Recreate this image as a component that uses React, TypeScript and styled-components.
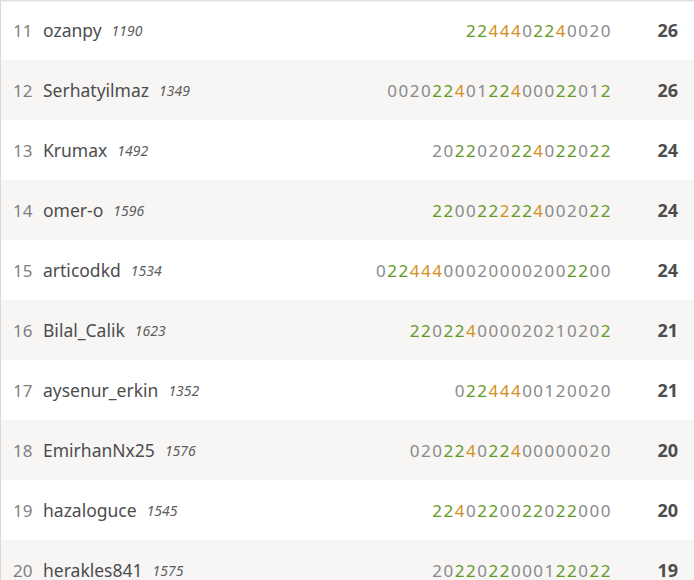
import styled, { createGlobalStyle } from 'styled-components'

const GlobalStyle = createGlobalStyle`
  html, body {
    margin: 0;
    padding: 0;
    background: #fff;
  }
  body {
    font-family: 'Noto Sans', 'Liberation Sans', sans-serif;
    color: #4d4d4d;
    overflow: hidden;
  }
`

type Player = {
  rank: number
  name: string
  rating: number
  sheet: string
  // indexes of scores played while on fire (orange)
  fire: number[]
  total: number
}

const players: Player[] = [
  { rank: 11, name: 'ozanpy', rating: 1190, sheet: '2244402240020', fire: [2, 3, 4, 8], total: 26 },
  { rank: 12, name: 'Serhatyilmaz', rating: 1349, sheet: '00202240122400022012', fire: [6, 11], total: 26 },
  { rank: 13, name: 'Krumax', rating: 1492, sheet: '2022020224022022', fire: [9], total: 24 },
  { rank: 14, name: 'omer-o', rating: 1596, sheet: '2200222224002022', fire: [6, 9], total: 24 },
  { rank: 15, name: 'articodkd', rating: 1534, sheet: '022444000200002002200', fire: [3, 4, 5], total: 24 },
  { rank: 16, name: 'Bilal_Calik', rating: 1623, sheet: '220224000020210202', fire: [5], total: 21 },
  { rank: 17, name: 'aysenur_erkin', rating: 1352, sheet: '02244400120020', fire: [3, 4, 5], total: 21 },
  { rank: 18, name: 'EmirhanNx25', rating: 1576, sheet: '020224022400000020', fire: [5, 9], total: 20 },
  { rank: 19, name: 'hazaloguce', rating: 1545, sheet: '2240220022022000', fire: [2], total: 20 },
  { rank: 20, name: 'herakles841', rating: 1575, sheet: '2022022000122022', fire: [], total: 19 },
]

const Table = styled.div`
  border-left: 1px solid #d9d9d9;
  box-shadow: inset 0 2px 2px -1px rgba(0, 0, 0, 0.18);
`

const Row = styled.div<{ $odd: boolean }>`
  display: flex;
  align-items: center;
  height: 60px;
  padding: 0 16px 0 12px;
  background: ${p => (p.$odd ? '#f7f6f5' : 'transparent')};
`

const Rank = styled.span`
  width: 30px;
  flex-shrink: 0;
  font-size: 17px;
  color: #7f7f7f;
`

const Name = styled.span`
  font-size: 17.5px;
  color: #4d4d4d;
`

const Rating = styled.em`
  margin-left: 10px;
  font-size: 14px;
  color: #5c5c5c;
`

const Sheet = styled.div`
  margin-left: auto;
  font-size: 17px;
  letter-spacing: 1.5px;
  white-space: nowrap;
`

const Score = styled.span<{ $kind: 'win' | 'fire' | 'none' }>`
  color: ${p => (p.$kind === 'fire' ? '#d59020' : p.$kind === 'win' ? '#629924' : '#8a8a8a')};
`

const Total = styled.strong`
  width: 66px;
  text-align: right;
  font-size: 18px;
  font-weight: 700;
  color: #4d4d4d;
`

const isWin = (ch?: string) => ch === '2' || ch === '4'

// a win counts as part of a streak when it touches another win, or is the latest game
const kindOf = (sheet: string, i: number, fire: number[]) => {
  if (fire.includes(i)) return 'fire'
  const ch = sheet[i]
  if (ch !== '2') return 'none'
  if (i === sheet.length - 1 || isWin(sheet[i - 1]) || isWin(sheet[i + 1])) return 'win'
  return 'none'
}

export default function App() {
  return (
    <>
      <GlobalStyle />
      <Table>
        {players.map((p, idx) => (
          <Row key={p.rank} $odd={idx % 2 === 1}>
            <Rank>{p.rank}</Rank>
            <Name>{p.name}</Name>
            <Rating>{p.rating}</Rating>
            <Sheet>
              {p.sheet.split('').map((ch, i) => (
                <Score key={i} $kind={kindOf(p.sheet, i, p.fire)}>
                  {ch}
                </Score>
              ))}
            </Sheet>
            <Total>{p.total}</Total>
          </Row>
        ))}
      </Table>
    </>
  )
}
